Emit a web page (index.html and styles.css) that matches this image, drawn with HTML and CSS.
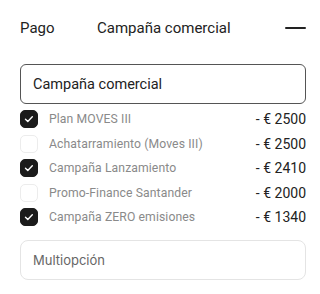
FILE: index.html
```html
<!DOCTYPE html>
<html lang="es">
<head>
<meta charset="utf-8">
<link rel="stylesheet" href="styles.css">
</head>
<body>
<div class="page">
  <div class="header">
    <span class="tab">Pago</span>
    <span class="title">Campaña comercial</span>
    <span class="dash"></span>
  </div>
  <div class="select">Campaña comercial</div>
  <div class="list">
    <div class="row"><span class="cb on"><svg viewBox="0 0 18 18"><path d="M5.5 9.2l2.3 2.2 4.5-4.6" fill="none" stroke="#fff" stroke-width="1.4" stroke-linecap="round" stroke-linejoin="round"/></svg></span><span class="label">Plan MOVES III</span><span class="amt">- € 2500</span></div>
    <div class="row"><span class="cb"></span><span class="label">Achatarramiento (Moves III)</span><span class="amt">- € 2500</span></div>
    <div class="row"><span class="cb on"><svg viewBox="0 0 18 18"><path d="M5.5 9.2l2.3 2.2 4.5-4.6" fill="none" stroke="#fff" stroke-width="1.4" stroke-linecap="round" stroke-linejoin="round"/></svg></span><span class="label">Campaña Lanzamiento</span><span class="amt">- € 2410</span></div>
    <div class="row"><span class="cb"></span><span class="label">Promo-Finance Santander</span><span class="amt">- € 2000</span></div>
    <div class="row"><span class="cb on"><svg viewBox="0 0 18 18"><path d="M5.5 9.2l2.3 2.2 4.5-4.6" fill="none" stroke="#fff" stroke-width="1.4" stroke-linecap="round" stroke-linejoin="round"/></svg></span><span class="label">Campaña ZERO emisiones</span><span class="amt">- € 1340</span></div>
  </div>
  <div class="multi">Multiopción</div>
</div>
</body>
</html>
```
FILE: styles.css
```css
html, body { margin: 0; padding: 0; background: #fff; }
body { width: 320px; height: 294px; overflow: hidden; font-family: Roboto, "Liberation Sans", sans-serif; color: #222; }
.page { padding: 0 14px 0 20px; }
.header { height: 56px; display: grid; grid-template-columns: 77px 1fr auto; align-items: center; font-size: 15px; color: #222; }
.dash { width: 21px; height: 2px; background: #222; border-radius: 1px; }
.select { margin-top: 8px; height: 40px; box-sizing: border-box; border: 1px solid #555; border-radius: 6px; padding-left: 12px; display: flex; align-items: center; font-size: 14.5px; color: #222; }
.list { margin-top: 3px; }
.row { height: 24.5px; display: flex; align-items: center; }
.cb { width: 18px; height: 18px; box-sizing: border-box; border-radius: 5px; border: 1px solid #ececec; flex: none; display: flex; }
.cb.on { background: #1b1b1b; border-color: #1b1b1b; }
.cb svg { width: 18px; height: 18px; margin: -1px; flex: none; }
.label { margin-left: 11px; flex: 1; font-family: Roboto, "Liberation Sans", sans-serif; font-size: 12.2px; letter-spacing: 0.1px; color: #8a8a8a; }
.amt { font-size: 14px; color: #222; }
.multi { margin-top: 10.5px; height: 40px; box-sizing: border-box; border: 1px solid #e4e4e4; border-radius: 8px; padding-left: 12px; display: flex; align-items: center; font-family: Inter, "Noto Sans", sans-serif; font-size: 13px; color: #666; }
```
